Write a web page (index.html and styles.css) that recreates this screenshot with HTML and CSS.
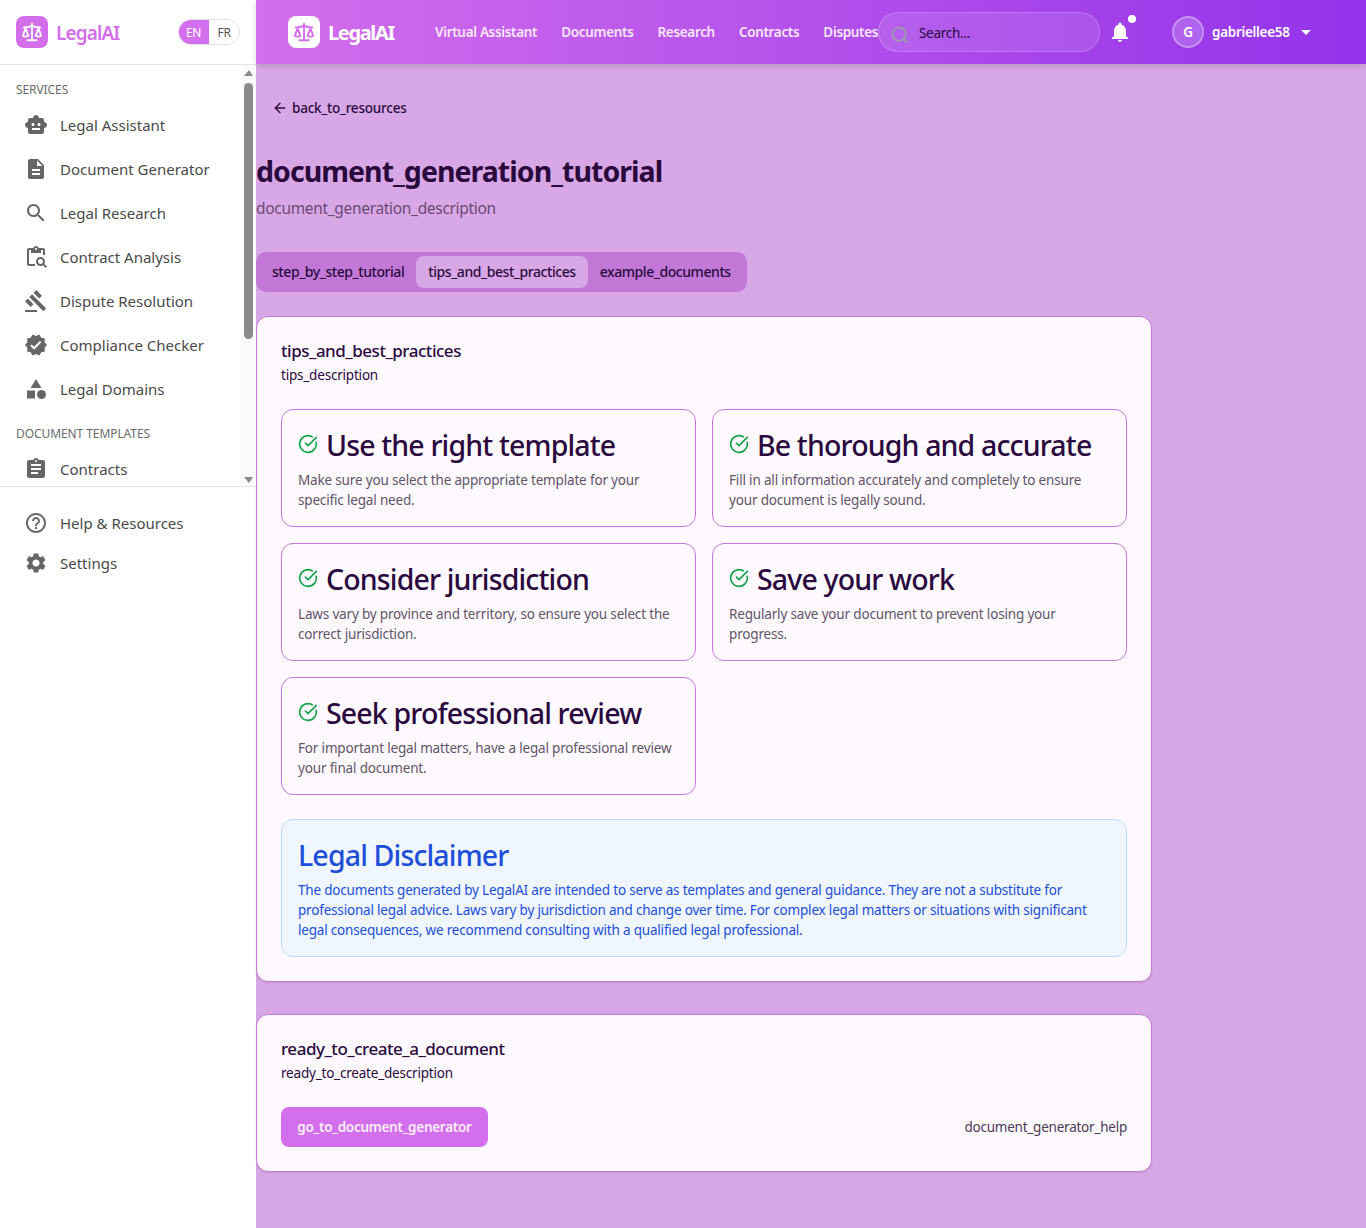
FILE: index.html
```html
<!DOCTYPE html>
<html lang="en">
<head>
    <meta charset="UTF-8">
    <meta name="viewport" content="width=device-width, initial-scale=1.0">
    <title>LegalAI - Document Generation Tutorial</title>
    <link rel="stylesheet" href="styles.css">
</head>
<body>
    <svg class="icon-defs" width="0" height="0">
        <defs>
            <symbol id="i-scale" viewBox="0 0 24 24"><g fill="none" stroke="currentColor" stroke-width="2" stroke-linecap="round" stroke-linejoin="round"><path d="m16 16 3-8 3 8c-.87.65-1.92 1-3 1s-2.13-.35-3-1Z"/><path d="m2 16 3-8 3 8c-.87.65-1.92 1-3 1s-2.13-.35-3-1Z"/><path d="M7 21h10"/><path d="M12 3v18"/><path d="M3 7h2c2 0 5-1 7-2 2 1 5 2 7 2h2"/></g></symbol>
            <symbol id="i-robot" viewBox="0 0 24 24"><path d="M20 9V7c0-1.1-.9-2-2-2h-3c0-1.66-1.34-3-3-3S9 3.34 9 5H6c-1.1 0-2 .9-2 2v2c-1.66 0-3 1.34-3 3s1.34 3 3 3v4c0 1.1.9 2 2 2h12c1.1 0 2-.9 2-2v-4c1.66 0 3-1.34 3-3s-1.34-3-3-3zM7.5 11.5c0-.83.67-1.5 1.5-1.5s1.5.67 1.5 1.5S9.83 13 9 13s-1.5-.67-1.5-1.5zM16 17H8v-2h8v2zm-1-4c-.83 0-1.5-.67-1.5-1.5S14.17 10 15 10s1.5.67 1.5 1.5S15.83 13 15 13z"/></symbol>
            <symbol id="i-doc" viewBox="0 0 24 24"><path d="M14 2H6c-1.1 0-1.99.9-1.99 2L4 20c0 1.1.89 2 1.99 2H18c1.1 0 2-.9 2-2V8l-6-6zm2 16H8v-2h8v2zm0-4H8v-2h8v2zm-3-5V3.5L18.5 9H13z"/></symbol>
            <symbol id="i-search" viewBox="0 0 24 24"><path d="M15.5 14h-.79l-.28-.27C15.41 12.59 16 11.11 16 9.5 16 5.91 13.09 3 9.5 3S3 5.91 3 9.5 5.91 16 9.5 16c1.61 0 3.09-.59 4.23-1.57l.27.28v.79l5 4.99L20.49 19l-4.99-5zm-6 0C7.01 14 5 11.99 5 9.5S7.01 5 9.5 5 14 7.01 14 9.5 11.99 14 9.5 14z"/></symbol>
            <symbol id="i-paste" viewBox="0 0 24 24"><path d="M5 5h2v3h10V5h2v5h2V5c0-1.1-.9-2-2-2h-4.18C14.4 1.84 13.3 1 12 1s-2.4.84-2.82 2H5c-1.1 0-2 .9-2 2v14c0 1.1.9 2 2 2h6v-2H5V5zm7-2c.55 0 1 .45 1 1s-.45 1-1 1-1-.45-1-1 .45-1 1-1z"/><path d="M20.3 18.9c.4-.7.7-1.5.7-2.4 0-2.5-2-4.5-4.5-4.5S12 14 12 16.5s2 4.5 4.5 4.5c.9 0 1.7-.3 2.4-.7l2.7 2.7 1.4-1.4-2.7-2.7zm-3.8.1c-1.4 0-2.5-1.1-2.5-2.5s1.1-2.5 2.5-2.5 2.5 1.1 2.5 2.5-1.1 2.5-2.5 2.5z"/></symbol>
            <symbol id="i-gavel" viewBox="0 0 24 24"><path d="M1 21h12v2H1zM5.245 8.07l2.83-2.827 14.14 14.142-2.828 2.828zM12.317 1l5.657 5.656-2.83 2.83-5.654-5.66zM3.825 9.485l5.657 5.657-2.828 2.828-5.657-5.657z"/></symbol>
            <symbol id="i-verified" viewBox="0 0 24 24"><path d="M23 12l-2.44-2.78.34-3.68-3.61-.82-1.89-3.18L12 3 8.6 1.54 6.71 4.72l-3.61.81.34 3.68L1 12l2.44 2.78-.34 3.69 3.61.82 1.89 3.18L12 21l3.4 1.46 1.89-3.18 3.61-.82-.34-3.68L23 12zm-12.91 4.72l-3.8-3.81 1.48-1.48 2.32 2.33 5.85-5.87 1.48 1.48-7.33 7.35z"/></symbol>
            <symbol id="i-category" viewBox="0 0 24 24"><path d="M12 2l-5.5 9h11z"/><circle cx="17.5" cy="17.5" r="4.5"/><path d="M3 13.5h8v8H3z"/></symbol>
            <symbol id="i-clipboard" viewBox="0 0 24 24"><path d="M19 3h-4.18C14.4 1.84 13.3 1 12 1c-1.3 0-2.4.84-2.82 2H5c-1.1 0-2 .9-2 2v14c0 1.1.9 2 2 2h14c1.1 0 2-.9 2-2V5c0-1.1-.9-2-2-2zm-7 0c.55 0 1 .45 1 1s-.45 1-1 1-1-.45-1-1 .45-1 1-1zm2 14H7v-2h7v2zm3-4H7v-2h10v2zm0-4H7V7h10v2z"/></symbol>
            <symbol id="i-help" viewBox="0 0 24 24"><path d="M11 18h2v-2h-2v2zm1-16C6.48 2 2 6.48 2 12s4.48 10 10 10 10-4.48 10-10S17.52 2 12 2zm0 18c-4.41 0-8-3.59-8-8s3.59-8 8-8 8 3.59 8 8-3.59 8-8 8zm0-14c-2.21 0-4 1.79-4 4h2c0-1.1.9-2 2-2s2 .9 2 2c0 2-3 1.75-3 5h2c0-2.25 3-2.5 3-5 0-2.21-1.79-4-4-4z"/></symbol>
            <symbol id="i-settings" viewBox="0 0 24 24"><path d="M19.14 12.94c.04-.3.06-.61.06-.94 0-.32-.02-.64-.07-.94l2.03-1.58c.18-.14.23-.41.12-.61l-1.92-3.32c-.12-.22-.37-.29-.59-.22l-2.39.96c-.5-.38-1.03-.7-1.62-.94l-.36-2.54c-.04-.24-.24-.41-.48-.41h-3.84c-.24 0-.43.17-.47.41l-.36 2.54c-.59.24-1.13.57-1.62.94l-2.39-.96c-.22-.08-.47 0-.59.22L2.74 8.87c-.12.21-.08.47.12.61l2.03 1.58c-.05.3-.09.63-.09.94s.02.64.07.94l-2.03 1.58c-.18.14-.23.41-.12.61l1.92 3.32c.12.22.37.29.59.22l2.39-.96c.5.38 1.03.7 1.62.94l.36 2.54c.05.24.24.41.48.41h3.84c.24 0 .44-.17.47-.41l.36-2.54c.59-.24 1.13-.56 1.62-.94l2.39.96c.22.08.47 0 .59-.22l1.92-3.32c.12-.22.07-.47-.12-.61l-2.01-1.58zM12 15.6c-1.98 0-3.6-1.62-3.6-3.6s1.62-3.6 3.6-3.6 3.6 1.62 3.6 3.6-1.62 3.6-3.6 3.6z"/></symbol>
            <symbol id="i-bell" viewBox="0 0 24 24"><path d="M12 22c1.1 0 2-.9 2-2h-4c0 1.1.89 2 2 2zm6-6v-5c0-3.07-1.64-5.64-4.5-6.32V4c0-.83-.67-1.5-1.5-1.5s-1.5.67-1.5 1.5v.68C7.63 5.36 6 7.92 6 11v5l-2 2v1h16v-1l-2-2z"/></symbol>
            <symbol id="i-check" viewBox="0 0 24 24"><g fill="none" stroke="currentColor" stroke-width="2" stroke-linecap="round" stroke-linejoin="round"><path d="M21.801 10A10 10 0 1 1 17 3.335"/><path d="m9 11 3 3L22 4"/></g></symbol>
        </defs>
    </svg>

    <!-- Sidebar -->
    <aside class="sidebar">
        <div class="side-brand">
            <span class="logo-box logo-box-pink"><svg class="logo-icon"><use href="#i-scale"/></svg></span>
            <span class="side-brand-name">LegalAI</span>
            <div class="lang-toggle">
                <span class="lang lang-active">EN</span>
                <span class="lang">FR</span>
            </div>
        </div>

        <div class="side-scroll">
            <nav class="side-nav">
                <div class="side-heading">SERVICES</div>
                <a class="side-item"><svg class="side-icon"><use href="#i-robot"/></svg>Legal Assistant</a>
                <a class="side-item"><svg class="side-icon"><use href="#i-doc"/></svg>Document Generator</a>
                <a class="side-item"><svg class="side-icon"><use href="#i-search"/></svg>Legal Research</a>
                <a class="side-item"><svg class="side-icon"><use href="#i-paste"/></svg>Contract Analysis</a>
                <a class="side-item"><svg class="side-icon"><use href="#i-gavel"/></svg>Dispute Resolution</a>
                <a class="side-item"><svg class="side-icon"><use href="#i-verified"/></svg>Compliance Checker</a>
                <a class="side-item"><svg class="side-icon"><use href="#i-category"/></svg>Legal Domains</a>
                <div class="side-heading side-heading-second">DOCUMENT TEMPLATES</div>
                <a class="side-item"><svg class="side-icon"><use href="#i-clipboard"/></svg>Contracts</a>
            </nav>
            <div class="scrollbar">
                <span class="scroll-arrow-up"></span>
                <span class="scroll-thumb"></span>
                <span class="scroll-arrow-down"></span>
            </div>
        </div>

        <div class="side-bottom">
            <a class="side-item side-item-small"><svg class="side-icon"><use href="#i-help"/></svg>Help &amp; Resources</a>
            <a class="side-item side-item-small"><svg class="side-icon"><use href="#i-settings"/></svg>Settings</a>
        </div>
    </aside>

    <div class="page">
        <!-- Top bar -->
        <header class="topbar">
            <div class="top-brand">
                <span class="logo-box logo-box-white"><svg class="logo-icon"><use href="#i-scale"/></svg></span>
                <span class="top-brand-name">LegalAI</span>
            </div>
            <nav class="top-links">
                <a>Virtual Assistant</a>
                <a>Documents</a>
                <a>Research</a>
                <a>Contracts</a>
                <a>Disputes</a>
            </nav>
            <div class="search-box">
                <svg class="search-icon" viewBox="0 0 24 24"><circle cx="11" cy="11" r="8"/><path d="m21 21-4.3-4.3"/></svg>
                <span class="search-text">Search...</span>
            </div>
            <div class="bell">
                <svg class="bell-icon"><use href="#i-bell"/></svg>
                <span class="bell-dot"></span>
            </div>
            <div class="user">
                <span class="avatar">G</span>
                <span class="user-name">gabriellee58</span>
                <span class="caret"></span>
            </div>
        </header>

        <!-- Main content -->
        <main class="content">
            <a class="back-link">
                <svg class="back-icon" viewBox="0 0 24 24"><path d="m12 19-7-7 7-7"/><path d="M19 12H5"/></svg>
                back_to_resources
            </a>

            <h1 class="page-title">document_generation_tutorial</h1>
            <p class="page-desc">document_generation_description</p>

            <div class="tabs">
                <button class="tab">step_by_step_tutorial</button>
                <button class="tab tab-active">tips_and_best_practices</button>
                <button class="tab">example_documents</button>
            </div>

            <section class="card">
                <h2 class="card-title">tips_and_best_practices</h2>
                <p class="card-desc">tips_description</p>

                <div class="tips-grid">
                    <div class="tip">
                        <h3 class="tip-title"><svg class="check-icon"><use href="#i-check"/></svg>Use the right template</h3>
                        <p class="tip-text">Make sure you select the appropriate template for your specific legal need.</p>
                    </div>
                    <div class="tip">
                        <h3 class="tip-title"><svg class="check-icon"><use href="#i-check"/></svg>Be thorough and accurate</h3>
                        <p class="tip-text">Fill in all information accurately and completely to ensure your document is legally sound.</p>
                    </div>
                    <div class="tip">
                        <h3 class="tip-title"><svg class="check-icon"><use href="#i-check"/></svg>Consider jurisdiction</h3>
                        <p class="tip-text">Laws vary by province and territory, so ensure you select the correct jurisdiction.</p>
                    </div>
                    <div class="tip">
                        <h3 class="tip-title"><svg class="check-icon"><use href="#i-check"/></svg>Save your work</h3>
                        <p class="tip-text">Regularly save your document to prevent losing your progress.</p>
                    </div>
                    <div class="tip">
                        <h3 class="tip-title"><svg class="check-icon"><use href="#i-check"/></svg>Seek professional review</h3>
                        <p class="tip-text">For important legal matters, have a legal professional review your final document.</p>
                    </div>
                </div>

                <div class="disclaimer">
                    <h3 class="disclaimer-title">Legal Disclaimer</h3>
                    <p class="disclaimer-text">The documents generated by LegalAI are intended to serve as templates and general guidance. They are not a substitute for professional legal advice. Laws vary by jurisdiction and change over time. For complex legal matters or situations with significant legal consequences, we recommend consulting with a qualified legal professional.</p>
                </div>
            </section>

            <section class="card card-cta">
                <h2 class="card-title">ready_to_create_a_document</h2>
                <p class="card-desc">ready_to_create_description</p>
                <div class="cta-row">
                    <button class="cta-button">go_to_document_generator</button>
                    <span class="cta-help">document_generator_help</span>
                </div>
            </section>
        </main>
    </div>
</body>
</html>
```

FILE: styles.css
```css
* {
    margin: 0;
    padding: 0;
    box-sizing: border-box;
}

body {
    font-family: "Noto Sans", "Open Sans", sans-serif;
    background-color: #d8a8e6;
    color: #2a0a3e;
    height: 1228px;
    overflow: hidden;
    display: flex;
}

.icon-defs {
    position: absolute;
}

/* Sidebar */
.sidebar {
    width: 256px;
    height: 1228px;
    flex-shrink: 0;
    background-color: #ffffff;
    display: flex;
    flex-direction: column;
}

.side-brand {
    height: 65px;
    flex-shrink: 0;
    display: flex;
    align-items: center;
    padding: 0 16px;
    border-bottom: 1px solid #e5e5e5;
}

.logo-box {
    width: 32px;
    height: 32px;
    border-radius: 8px;
    display: flex;
    align-items: center;
    justify-content: center;
    flex-shrink: 0;
}

.logo-box-pink {
    background-color: #d36eec;
    color: #ffffff;
}

.logo-box-white {
    background-color: #ffffff;
    color: #d36eec;
}

.logo-icon {
    width: 22px;
    height: 22px;
}

.side-brand-name {
    font-size: 19px;
    font-weight: 600;
    color: #d36eec;
    margin-left: 8px;
    margin-top: 1px;
    letter-spacing: -0.9px;
}

.lang-toggle {
    margin-left: auto;
    display: flex;
    height: 26px;
    border: 1px solid #dddddd;
    border-radius: 13px;
    overflow: hidden;
    font-size: 12px;
    letter-spacing: -0.3px;
}

.lang {
    width: 30px;
    display: flex;
    align-items: center;
    justify-content: center;
    color: #555555;
}

.lang-active {
    background-color: #d36eec;
    color: #ffffff;
    width: 31px;
    margin: -1px 0 -1px -1px;
}

.side-scroll {
    position: relative;
    height: 422px;
    flex-shrink: 0;
    overflow: hidden;
    border-bottom: 1px solid #e5e5e5;
}

.side-nav {
    padding-top: 17px;
}

.side-heading {
    font-size: 12px;
    line-height: 16px;
    color: #6b6b6b;
    padding-left: 16px;
    margin-bottom: 5px;
    letter-spacing: -0.08px;
}

.side-heading-second {
    margin-top: 15px;
}

.side-item {
    display: flex;
    align-items: center;
    height: 44px;
    padding-left: 24px;
    font-size: 15px;
    color: #4a4a4a;
}

.side-icon {
    width: 24px;
    height: 24px;
    margin-right: 12px;
    fill: #666666;
    flex-shrink: 0;
}

.side-bottom {
    padding-top: 16px;
}

.side-item-small {
    height: 40px;
}

/* Fake scrollbar, sits over the nav */
.scrollbar {
    position: absolute;
    top: 0;
    right: 0;
    bottom: 0;
    width: 15px;
    background-color: #fafafa;
}

.scroll-thumb {
    position: absolute;
    top: 18px;
    left: 3px;
    width: 9px;
    height: 256px;
    border-radius: 5px;
    background-color: #8a8a8a;
}

.scroll-arrow-up,
.scroll-arrow-down {
    position: absolute;
    left: 3px;
    width: 0;
    height: 0;
    border-left: 5px solid transparent;
    border-right: 4px solid transparent;
}

.scroll-arrow-up {
    top: 5px;
    border-bottom: 6px solid #8a8a8a;
}

.scroll-arrow-down {
    bottom: 3px;
    border-top: 6px solid #8a8a8a;
}

/* Page */
.page {
    flex: 1;
    min-width: 0;
    display: flex;
    flex-direction: column;
}

.topbar {
    height: 64px;
    flex-shrink: 0;
    display: flex;
    align-items: center;
    padding-left: 32px;
    background: linear-gradient(to right, #d36eec, #9333ea);
    box-shadow: 0 2px 6px rgba(0, 0, 0, 0.15);
    color: #ffffff;
}

.top-brand {
    display: flex;
    align-items: center;
    gap: 8px;
    width: 147px;
    flex-shrink: 0;
}

.top-brand-name {
    font-size: 20px;
    font-weight: 700;
    letter-spacing: -1.35px;
}

.top-links {
    display: flex;
    gap: 24px;
    font-size: 13.5px;
    font-weight: 600;
    letter-spacing: -0.33px;
    color: #f7e6fc;
    width: 443px;
    flex-shrink: 0;
    white-space: nowrap;
}

.search-box {
    width: 222px;
    height: 40px;
    border: 1px solid rgba(255, 255, 255, 0.2);
    border-radius: 20px;
    background-color: rgba(255, 255, 255, 0.1);
    display: flex;
    align-items: center;
    padding-left: 11px;
    font-size: 13.5px;
    letter-spacing: -0.3px;
    color: #2a0a3e;
}

.search-text {
    margin-top: 1px;
}

.search-icon {
    width: 20px;
    height: 20px;
    margin-right: 9px;
    margin-top: 6px;
    fill: none;
    stroke: #9aa0a6;
    stroke-width: 2;
    stroke-linecap: round;
}

.bell {
    position: relative;
    width: 24px;
    height: 24px;
    margin-left: 8px;
}

.bell-icon {
    width: 24px;
    height: 24px;
    fill: #ffffff;
}

.bell-dot {
    position: absolute;
    top: -5px;
    right: -4px;
    width: 8px;
    height: 8px;
    border-radius: 50%;
    background-color: #ffffff;
}

.user {
    display: flex;
    align-items: center;
    margin-left: 40px;
    font-size: 13.5px;
    font-weight: 600;
    letter-spacing: -0.3px;
}

.avatar {
    width: 32px;
    height: 32px;
    border-radius: 50%;
    border: 2px solid rgba(255, 255, 255, 0.3);
    background-color: rgba(255, 255, 255, 0.2);
    display: flex;
    align-items: center;
    justify-content: center;
    margin-right: 8px;
}

.caret {
    margin-left: 11px;
    border-left: 5px solid transparent;
    border-right: 5px solid transparent;
    border-top: 5px solid #ffffff;
}

/* Main content */
.content {
    width: 896px;
    padding-top: 32px;
}

.back-link {
    display: flex;
    align-items: center;
    height: 24px;
    padding-left: 16px;
    font-size: 13.5px;
    letter-spacing: -0.22px;
    font-weight: 500;
}

.back-icon {
    width: 16px;
    height: 16px;
    margin-right: 4px;
    fill: none;
    stroke: currentColor;
    stroke-width: 2;
    stroke-linecap: round;
    stroke-linejoin: round;
}

.page-title {
    margin-top: 33px;
    font-size: 28.5px;
    line-height: 36px;
    font-weight: 700;
    letter-spacing: -0.96px;
}

.page-desc {
    margin-top: 7px;
    font-size: 15.5px;
    line-height: 24px;
    color: #6b4a78;
    letter-spacing: -0.32px;
}

.tabs {
    margin-top: 32px;
    display: flex;
    width: fit-content;
    height: 40px;
    padding: 4px;
    background-color: #c378d8;
    border-radius: 10px;
}

.tab {
    border: none;
    background: none;
    font-family: inherit;
    color: #2a0a3e;
    font-size: 14px;
    font-weight: 500;
    letter-spacing: -0.43px;
    padding: 0 12px 2px;
    border-radius: 8px;
}

.tab-active {
    background-color: #d8a8e6;
}

.card {
    margin-top: 24px;
    padding: 24px;
    background-color: #fef9ff;
    border: 1px solid #c378d8;
    border-radius: 12px;
    box-shadow: 0 1px 2px rgba(0, 0, 0, 0.1);
}

.card-cta {
    margin-top: 32px;
}

.card-title {
    font-size: 17px;
    line-height: 20px;
    font-weight: 500;
    letter-spacing: -0.48px;
}

.card-desc {
    margin-top: 4px;
    font-size: 13.5px;
    line-height: 20px;
    letter-spacing: -0.2px;
}

.tips-grid {
    margin-top: 24px;
    display: grid;
    grid-template-columns: 1fr 1fr;
    gap: 16px;
}

.tip {
    height: 118px;
    padding: 17px 16px 16px;
    border: 1px solid #c378d8;
    border-radius: 12px;
}

.tip-title {
    display: flex;
    align-items: center;
    font-size: 28.5px;
    line-height: 36px;
    font-weight: 500;
    letter-spacing: -0.85px;
}

.check-icon {
    width: 20px;
    height: 20px;
    color: #16a34a;
    margin-right: 8px;
    margin-top: -3px;
    flex-shrink: 0;
}

.tip-text {
    margin-top: 7px;
    font-size: 13.5px;
    line-height: 20px;
    color: #5f5566;
    letter-spacing: -0.17px;
}

.disclaimer {
    margin-top: 24px;
    padding: 17px 16px 16px;
    height: 138px;
    background-color: #eff6ff;
    border: 1px solid #bfdbfe;
    border-radius: 12px;
    color: #1d4ed8;
}

.disclaimer-title {
    font-size: 28.5px;
    line-height: 36px;
    font-weight: 500;
    letter-spacing: -0.85px;
}

.disclaimer-text {
    margin-top: 7px;
    font-size: 13.5px;
    line-height: 20px;
    letter-spacing: -0.19px;
}

.cta-row {
    margin-top: 24px;
    display: flex;
    align-items: center;
    justify-content: space-between;
}

.cta-button {
    height: 40px;
    width: 207px;
    border: none;
    border-radius: 8px;
    background-color: #d36eec;
    color: #f9eefc;
    font-family: inherit;
    font-size: 13.5px;
    font-weight: 600;
    letter-spacing: -0.27px;
}

.cta-help {
    font-size: 13.5px;
    color: #4a3a55;
    letter-spacing: -0.23px;
}
```
